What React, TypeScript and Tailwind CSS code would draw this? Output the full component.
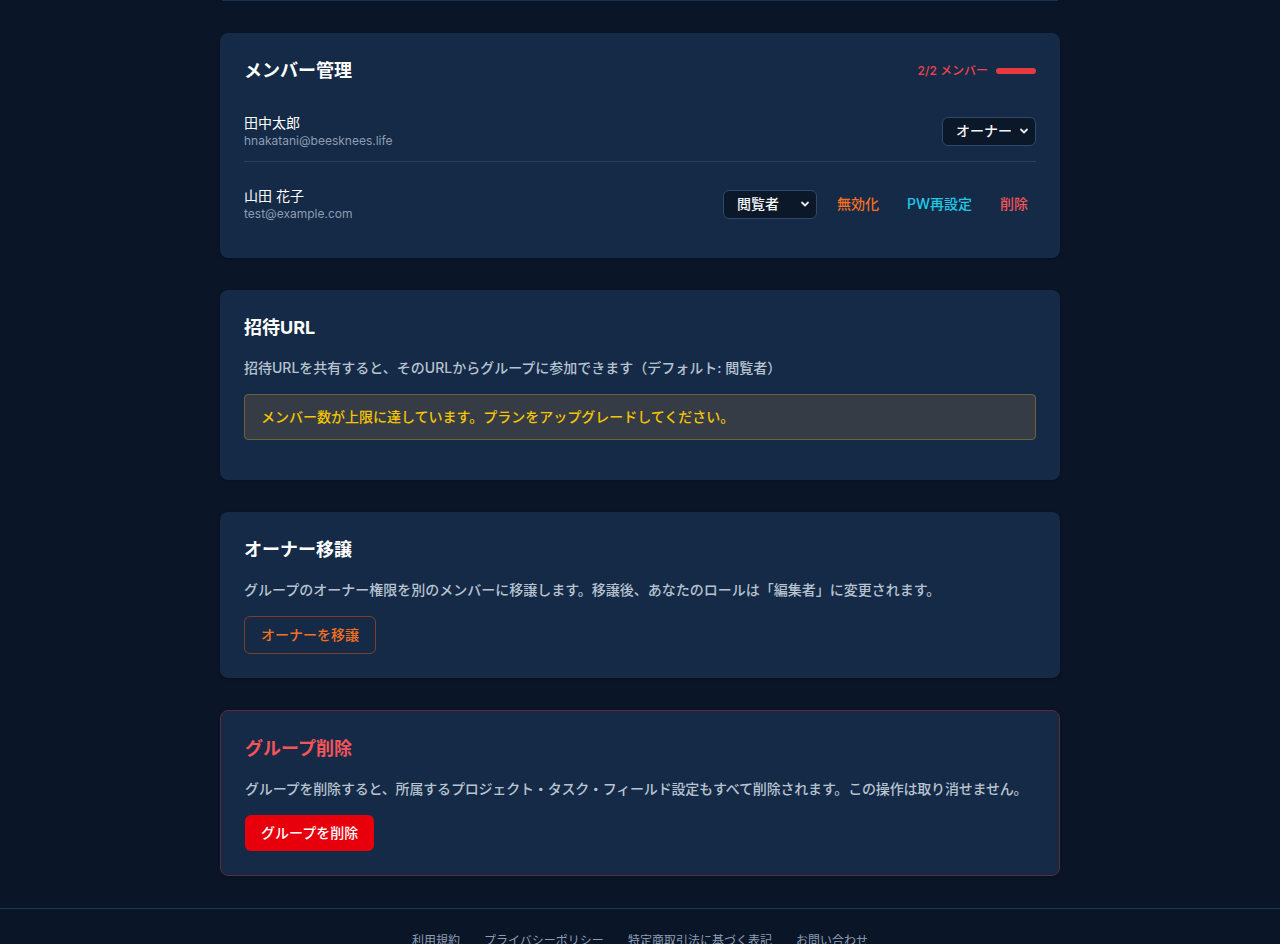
import React from "react";

function Chevron() {
  return (
    <svg
      className="pointer-events-none absolute right-[7px] top-1/2 -translate-y-1/2"
      width="10"
      height="10"
      viewBox="0 0 10 10"
      fill="none"
    >
      <path d="M2 3.5 L5 6.5 L8 3.5" stroke="#e5e7eb" strokeWidth="1.8" strokeLinecap="round" strokeLinejoin="round" />
    </svg>
  );
}

function RoleSelect({ value, options }: { value: string; options: string[] }) {
  return (
    <div className="relative w-[94px]">
      <select
        defaultValue={value}
        className="h-[29px] w-full appearance-none rounded-md border border-[#2d4a6b] bg-[#0b1829] pl-[13px] pr-6 text-sm font-medium text-gray-100 outline-none"
      >
        {options.map((o) => (
          <option key={o} value={o}>
            {o}
          </option>
        ))}
      </select>
      <Chevron />
    </div>
  );
}

function Card({ children, danger }: { children: React.ReactNode; danger?: boolean }) {
  return (
    <section
      className={
        "rounded-lg bg-[#142a46] p-6 shadow-[0_1px_3px_rgba(0,0,0,0.35)] " +
        (danger ? "border border-[#5e2a3c]" : "")
      }
    >
      {children}
    </section>
  );
}

export default function App() {
  return (
    <div
      className="min-h-[944px] bg-[#0a1628] text-white"
      style={{ fontFamily: 'Inter, "Noto Sans CJK JP", sans-serif' }}
    >
      <div className="mx-auto w-[840px]">
        <div className="mx-[2px] h-[1px] rounded-b-lg bg-[#1a3354]" />
        <div className="flex flex-col gap-8 pt-8">
          {/* Member management */}
          <Card>
            <div className="mb-4 flex items-center justify-between">
              <h2 className="text-lg font-bold leading-7 text-white">メンバー管理</h2>
              <div className="flex items-center gap-2">
                <span className="text-xs font-medium text-[#f0424d]">2/2 メンバー</span>
                <div className="h-[6px] w-10 rounded-full bg-[#e63940]" />
              </div>
            </div>
            <div className="space-y-3">
              <div className="flex items-center justify-between border-b border-[#24405f] py-3">
                <div>
                  <div className="text-sm leading-5 text-white">田中太郎</div>
                  <div className="text-xs leading-4 text-[#8d9db3]">hnakatani@beesknees.life</div>
                </div>
                <RoleSelect value="オーナー" options={["オーナー", "編集者", "閲覧者"]} />
              </div>
              <div className="flex items-center justify-between py-3">
                <div>
                  <div className="text-sm leading-5 text-white">山田 花子</div>
                  <div className="text-xs leading-4 text-[#8d9db3]">test@example.com</div>
                </div>
                <div className="flex items-center gap-3">
                  <RoleSelect value="閲覧者" options={["編集者", "閲覧者"]} />
                  <button className="px-2 text-sm font-medium text-[#f5701f]">無効化</button>
                  <button className="px-2 text-sm font-medium text-[#22c8e5]">PW再設定</button>
                  <button className="px-2 text-sm font-medium text-[#f5545a]">削除</button>
                </div>
              </div>
            </div>
          </Card>

          {/* Invite URL */}
          <Card>
            <h2 className="mb-4 text-lg font-bold leading-7 text-white">招待URL</h2>
            <p className="mb-4 text-sm leading-5 font-medium text-[#b8c3d1]">
              招待URLを共有すると、そのURLからグループに参加できます（デフォルト: 閲覧者）
            </p>
            <div className="mb-4 rounded border border-[#6e6136] bg-[#353c46] px-4 py-3 text-sm leading-5 font-medium text-[#f6c400]">
              メンバー数が上限に達しています。プランをアップグレードしてください。
            </div>
          </Card>

          {/* Owner transfer */}
          <Card>
            <h2 className="mb-4 text-lg font-bold leading-7 text-white">オーナー移譲</h2>
            <p className="mb-4 text-sm leading-5 font-medium text-[#b8c3d1]">
              グループのオーナー権限を別のメンバーに移譲します。移譲後、あなたのロールは「編集者」に変更されます。
            </p>
            <button className="rounded-md border border-[#7a3f27] px-4 py-2 text-sm leading-5 font-medium text-[#f5701f]">
              オーナーを移譲
            </button>
          </Card>

          {/* Group delete */}
          <Card danger>
            <h2 className="mb-4 text-lg font-bold leading-7 text-[#f5545a]">グループ削除</h2>
            <p className="mb-4 whitespace-nowrap text-sm leading-5 font-medium tracking-[-0.18px] text-[#b8c3d1]">
              グループを削除すると、所属するプロジェクト・タスク・フィールド設定もすべて削除されます。この操作は取り消せません。
            </p>
            <button className="rounded-md bg-[#e7000b] px-4 py-2 text-sm leading-5 font-medium text-white">
              グループを削除
            </button>
          </Card>
        </div>
      </div>

      <footer className="mt-8 border-t border-[#1d3553] py-6">
        <nav className="flex justify-center gap-6 text-xs leading-4 text-[#8d9db3]">
          <a>利用規約</a>
          <a>プライバシーポリシー</a>
          <a>特定商取引法に基づく表記</a>
          <a>お問い合わせ</a>
        </nav>
      </footer>
    </div>
  );
}
